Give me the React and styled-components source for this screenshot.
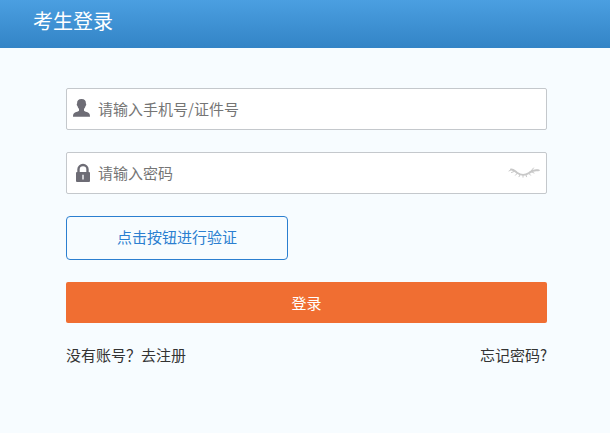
import React, { useState } from "react";
import styled, { createGlobalStyle } from "styled-components";

const GlobalStyle = createGlobalStyle`
  * {
    box-sizing: border-box;
  }

  body {
    margin: 0;
    background: #f7fcff;
    color: #333;
    font-family: "Noto Sans CJK SC", sans-serif;
    font-size: 15px;
  }

  button,
  input {
    font-family: inherit;
    font-size: inherit;
  }
`;

const Header = styled.header`
  display: flex;
  align-items: center;
  height: 48px;
  padding: 0 33px 6px;
  background: linear-gradient(#4b9fe1, #3384c6);
`;

const Title = styled.h1`
  margin: 0;
  color: #fff;
  font-size: 20px;
  font-weight: 400;
  line-height: 28px;
`;

const Form = styled.form`
  display: flex;
  flex-direction: column;
  gap: 22px;
  padding: 40px 63px 40px 66px;
`;

const Field = styled.label`
  display: flex;
  align-items: center;
  height: 42px;
  padding: 0 6px;
  background: #fff;
  border: 1px solid #c4c8cc;
  border-radius: 2px;
`;

const Input = styled.input`
  flex: 1;
  min-width: 0;
  height: 40px;
  margin-left: 6px;
  padding: 0 0 2px;
  background: none;
  border: 0;
  outline: none;
  color: #333;

  &::placeholder {
    color: #757575;
    opacity: 1;
  }
`;

const EyeButton = styled.button`
  display: flex;
  padding: 0;
  background: none;
  border: 0;
  cursor: pointer;
`;

const VerifyButton = styled.button`
  align-self: flex-start;
  width: 222px;
  height: 44px;
  padding: 0 0 3px;
  background: none;
  border: 1px solid #2b7fd0;
  border-radius: 4px;
  color: #2b7fd0;
  cursor: pointer;
`;

const LoginButton = styled.button`
  height: 41px;
  padding: 0;
  background: #f06e32;
  border: 0;
  border-radius: 2px;
  color: #fff;
  cursor: pointer;
`;

const Links = styled.div`
  display: flex;
  justify-content: space-between;
  line-height: 20px;
`;

const TextLink = styled.a`
  color: #333;
  text-decoration: none;
`;

const UserIcon = () => (
  <svg width="19" height="20" viewBox="0 0 19 20" fill="#6d6c75" aria-hidden="true">
    <path d="M8.5 0C5.3 0 4 1.700 4.100 4.500c-.6.300-.4 2 .4 2.600.3 1.400.9 2.200 1.500 2.900v1.800c-.8.700-2.500 1.100-4 1.800C.5 14.300 0 15.500 0 17.800h17c0-2.300-.5-3.500-2-4.200-1.500-.7-3.200-1.100-4-1.800V10c.6-.7 1.200-1.500 1.500-2.900.8-.6 1-2.300.4-2.600C13 1.700 11.700 0 8.500 0z" />
  </svg>
);

const LockIcon = () => (
  <svg width="19" height="20" viewBox="0 0 19 20" aria-hidden="true">
    <path
      d="M5.500 10V6.300a4.500 4.300 0 0 1 9 0V10"
      fill="none"
      stroke="#6d6c75"
      strokeWidth="2.400"
    />
    <rect x="3" y="9" width="14" height="10" rx="1" fill="#6d6c75" />
    <path d="M10 11.800v4.700" fill="none" stroke="#d8d8dc" strokeWidth="1.800" />
  </svg>
);

const ClosedEyeIcon = () => (
  <svg
    width="32"
    height="16"
    viewBox="0 0 32 16"
    fill="none"
    stroke="#c8c8c8"
    strokeLinecap="round"
    aria-hidden="true"
  >
    <path d="M3 4.500c2.500-.3 3.500 1.500 6 3.300 3.500 2.500 8.500 2.500 12 .2C24 6 25 4.500 30 5.300" strokeWidth="2" />
    <path
      d="M3.500 4.500L1 6M6 6.500L3.500 7.500M9 8.500l-1.500 1.700M12 10l-1 1.700M15 10.500v1.700M18 10l.5 1.700M21 8.500l1.500 1.700M24 7l2 1M28 5.300l3.500 0M23 6l2.500-3"
      strokeWidth="1"
    />
  </svg>
);

const App = () => {
  const [showPassword, setShowPassword] = useState(false);

  const handleSubmit = (event) => {
    event.preventDefault();
  };

  return (
    <>
      <GlobalStyle />
      <Header>
        <Title>考生登录</Title>
      </Header>
      <Form onSubmit={handleSubmit}>
        <Field>
          <UserIcon />
          <Input
            type="text"
            aria-label="手机号/证件号"
            placeholder="请输入手机号/证件号"
          />
        </Field>
        <Field>
          <LockIcon />
          <Input
            type={showPassword ? "text" : "password"}
            aria-label="密码"
            placeholder="请输入密码"
          />
          <EyeButton
            type="button"
            aria-label="显示密码"
            onClick={() => setShowPassword(!showPassword)}
          >
            <ClosedEyeIcon />
          </EyeButton>
        </Field>
        <VerifyButton type="button">点击按钮进行验证</VerifyButton>
        <LoginButton type="submit">登录</LoginButton>
        <Links>
          <TextLink href="#register">没有账号？去注册</TextLink>
          <TextLink href="#forgot">忘记密码?</TextLink>
        </Links>
      </Form>
    </>
  );
};

export default App;
